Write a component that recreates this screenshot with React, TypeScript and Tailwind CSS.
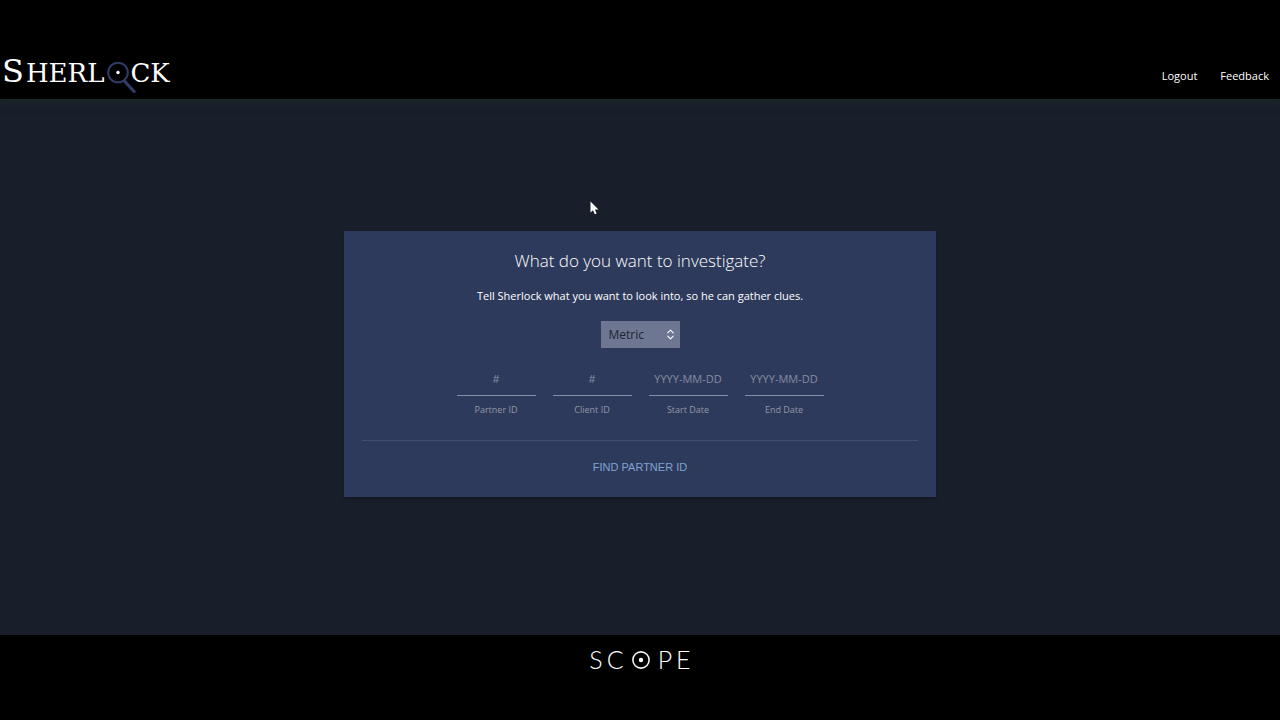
import { ChevronsUpDown } from "lucide-react";

type Field = { id: string; label: string; placeholder: string };

const fields: Field[] = [
  { id: "partner-id", label: "Partner ID", placeholder: "#" },
  { id: "client-id", label: "Client ID", placeholder: "#" },
  { id: "start-date", label: "Start Date", placeholder: "YYYY-MM-DD" },
  { id: "end-date", label: "End Date", placeholder: "YYYY-MM-DD" },
];

function SherlockLogo() {
  return (
    <a
      href="#home"
      aria-label="Sherlock"
      className="flex h-9 items-baseline gap-0.5 font-['DejaVu_Serif',serif] text-[26px] leading-9 font-normal text-white"
    >
      <span className="text-[32px]">S</span>
      <span>HERL</span>
      <svg width="30" height="32" viewBox="0 0 30 32" className="mt-2 -mr-2 self-start" aria-hidden="true">
        <circle cx="12" cy="11.5" r="9.8" fill="none" stroke="#2e3c66" strokeWidth="2" />
        <path d="M18 19.5 L29 31.5" stroke="#2e3c66" strokeWidth="3.2" />
        <circle cx="12" cy="11.5" r="1.7" fill="#fff" />
      </svg>
      <span>CK</span>
    </a>
  );
}

function ScopeLogo() {
  return (
    <div className="flex items-baseline gap-1 font-['Lato',sans-serif] text-[25px] leading-7 font-light text-white">
      <span>S</span>
      <span>C</span>
      <svg width="18" height="18" viewBox="0 0 18 18" className="mx-1" aria-hidden="true">
        <circle cx="9" cy="9" r="8.1" fill="none" stroke="#f2f2f2" strokeWidth="1.6" />
        <circle cx="9" cy="9" r="2.2" fill="#fff" />
      </svg>
      <span>P</span>
      <span>E</span>
    </div>
  );
}

export default function App() {
  return (
    <div className="relative flex min-h-screen flex-col bg-[#181f2b] font-['Open_Sans',sans-serif] text-white">
      <header className="z-10 flex items-end justify-between bg-black pt-[53px] pr-[11px] pb-2.5 pl-0.5 shadow-[0_4px_8px_#1b2727]">
        <SherlockLogo />
        <nav className="flex gap-[23px] pb-[3px] text-[11px] leading-5">
          <a href="#logout">Logout</a>
          <a href="#feedback">Feedback</a>
        </nav>
      </header>

      <main className="flex flex-1 items-center justify-center pb-1.5">
        <form className="flex w-[592px] max-w-full flex-col items-center bg-[#2e3a5c] px-[18px] pt-4 pb-5 shadow-[0_2px_4px_#00000033]">
          <h1 className="text-[17px] leading-7 font-light">What do you want to investigate?</h1>
          <p className="mt-[11px] text-[11px] leading-5">
            Tell Sherlock what you want to look into, so he can gather clues.
          </p>
          <div className="mt-[15px] grid w-[79px] items-center">
            <select
              aria-label="Search type"
              className="col-start-1 row-start-1 h-[27px] w-full appearance-none bg-[#6e7691] pl-2 text-xs text-[#1c2536]"
            >
              <option>Metric</option>
            </select>
            <ChevronsUpDown
              size={13}
              className="pointer-events-none col-start-1 row-start-1 mr-[3px] justify-self-end text-white"
            />
          </div>
          <div className="mt-5 flex gap-[17px]">
            {fields.map((f) => (
              <div key={f.id} className="flex w-[79px] flex-col">
                <input
                  id={f.id}
                  placeholder={f.placeholder}
                  className="h-7 w-full border-b border-[#8890a6] pb-1.5 text-center text-[11px] outline-none placeholder:text-[#858ca0]"
                />
                <label htmlFor={f.id} className="mt-1.5 text-center text-[9px] leading-4 text-[#9297a6]">
                  {f.label}
                </label>
              </div>
            ))}
          </div>
          <div className="mt-[22px] w-full border-t border-[#434e6d] pt-3 text-center">
            <button
              type="button"
              className="font-['Liberation_Sans',sans-serif] text-[11px] leading-5 text-[#7fa3d0]"
            >
              FIND PARTNER ID
            </button>
          </div>
        </form>
      </main>

      <footer className="flex justify-center bg-black pt-2.5 pb-[47px]">
        <ScopeLogo />
      </footer>

      <svg
        width="9"
        height="14"
        viewBox="0 0 9 14"
        className="pointer-events-none absolute top-[201px] left-[590px]"
        aria-hidden="true"
      >
        <path d="M0.5 0.5V11.5L3 9.2L4.8 13.2L6.6 12.4L4.9 8.6H8.4Z" fill="#fff" />
      </svg>
    </div>
  );
}
